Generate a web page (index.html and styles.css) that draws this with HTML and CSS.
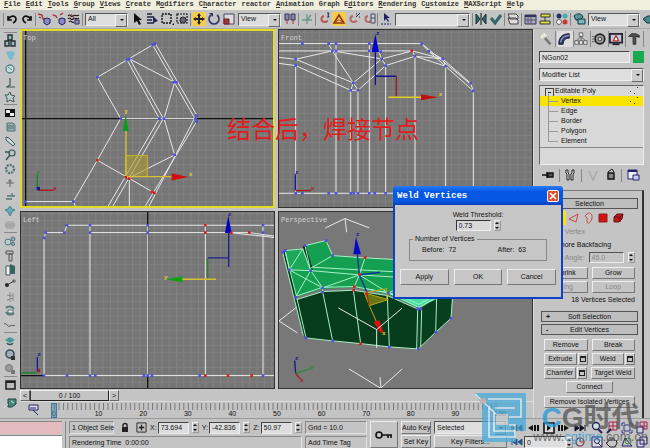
FILE: index.html
```
<!DOCTYPE html>
<html lang="en">
<head>
    <meta charset="UTF-8">
    <meta name="viewport" content="width=device-width, initial-scale=1.0">
    <title>Weld Vertices</title>
    <link rel="stylesheet" href="styles.css">
</head>
<body>
<div class="app">
    <nav class="menubar">
        <button><u>F</u>ile</button>
        <button><u>E</u>dit</button>
        <button><u>T</u>ools</button>
        <button><u>G</u>roup</button>
        <button><u>V</u>iews</button>
        <button><u>C</u>reate</button>
        <button>M<u>o</u>difiers</button>
        <button>C<u>h</u>aracter</button>
        <button>reactor</button>
        <button><u>A</u>nimation</button>
        <button>Graph E<u>d</u>itors</button>
        <button><u>R</u>endering</button>
        <button>C<u>u</u>stomize</button>
        <button><u>M</u>AXScript</button>
        <button><u>H</u>elp</button>
    </nav>

    <div class="toolbar">
        <i class="sep"></i>
        <button class="tool" aria-label="Undo"><svg viewBox="0 0 14 14"><path d="M3 4v4h4M3 8c2-5 8-5 8-1 0 2-1 3-3 4" fill="none" stroke="#111" stroke-width="1.6"/></svg></button>
        <button class="tool" aria-label="Redo"><svg viewBox="0 0 14 14"><path d="M11 4v4H7M11 8C9 3 3 3 3 7c0 2 1 3 3 4" fill="none" stroke="#111" stroke-width="1.6"/></svg></button>
        <i class="sep"></i>
        <button class="tool" aria-label="Link"><svg viewBox="0 0 14 14"><path d="M1 2l4 1 1 4 3 1" fill="none" stroke="#a33" stroke-width="1.5"/><path d="M7 7l3-1 3 1v4l-3 2-3-2z" fill="#88c" stroke="#225"/><path d="M2 5l2 1" stroke="#333"/></svg></button>
        <button class="tool" aria-label="Unlink"><svg viewBox="0 0 14 14"><path d="M1 3l3 1 1 2M8 3l3-2" fill="none" stroke="#a33" stroke-width="1.4"/><path d="M7 7l3-1 3 1v4l-3 2-3-2z" fill="#88c" stroke="#225"/></svg></button>
        <button class="tool" aria-label="Bind"><svg viewBox="0 0 14 14"><path d="M1 4c2-3 3 2 5 0s3 1 6-1M1 7c2-3 3 2 5 0s3 1 6-1M2 10c2-3 3 2 5 0" fill="none" stroke="#222" stroke-width="1.2"/><path d="M4 2l7 9" stroke="#a33"/><path d="M8 8h4v4H8z" fill="#99c" stroke="#225"/></svg></button>
        <i class="sep"></i>
        <label class="combo combo-all"><select aria-label="Selection filter"><option>All</option></select></label>
        <button class="tool" aria-label="Select"><svg viewBox="0 0 14 14"><path d="M4 1v10l3-2 2 4 2-1-2-4h3z" fill="#111"/></svg></button>
        <button class="tool" aria-label="Select by name"><svg viewBox="0 0 14 14"><path d="M2 2h5M2 5h7M2 8h5M2 11h7" stroke="#224" stroke-width="1.6"/><path d="M8 4v7l5-2z" fill="#225"/></svg></button>
        <button class="tool" aria-label="Rectangular region"><svg viewBox="0 0 14 14"><path d="M2 2h9v9H2z" fill="none" stroke="#111" stroke-width="1.4" stroke-dasharray="2 1"/><path d="M12 13h2v-2z"/></svg></button>
        <button class="tool" aria-label="Window crossing"><svg viewBox="0 0 14 14"><path d="M2 2h10v9H2z" fill="none" stroke="#111" stroke-width="1.2" stroke-dasharray="2 1"/><circle cx="8" cy="8" r="3" fill="#667" stroke="#222"/></svg></button>
        <i class="sep"></i>
        <button class="tool on" aria-label="Move"><svg viewBox="0 0 14 14"><path d="M7 1l2 3H8v2h2V5l3 2-3 2V8H8v2h1l-2 3-2-3h1V8H4v1L1 7l3-2v1h2V4H5z" fill="#222"/></svg></button>
        <button class="tool" aria-label="Rotate"><svg viewBox="0 0 14 14"><path d="M4 3a5 5 0 1 0 6 0" fill="none" stroke="#336" stroke-width="1.6"/><path d="M2 1h4v4z" fill="#336"/></svg></button>
        <button class="tool" aria-label="Scale"><svg viewBox="0 0 14 14"><path d="M2 2h10v10H2z" fill="#ddd" stroke="#446"/><path d="M2 7h5v5H2z" fill="#a33" stroke="#622"/></svg></button>
        <label class="combo combo-view"><select aria-label="Reference coordinates"><option>View</option></select></label>
        <button class="tool" aria-label="Pivot"><svg viewBox="0 0 14 14"><path d="M2 2h4v6H2zM8 2h4v6H8z" fill="#88a" stroke="#335"/><path d="M4 8v4M10 8v4" stroke="#a33"/></svg></button>
        <i class="sep"></i>
        <button class="tool" aria-label="Manipulate"><svg viewBox="0 0 14 14"><path d="M7 2v10M2 8h10M7 8l4-5" stroke="#698" stroke-width="1.3" fill="none"/></svg></button>
        <i class="sep"></i>
        <button class="tool" aria-label="Snap"><svg viewBox="0 0 14 14"><path d="M7 4a3 3 0 1 0 1 6l3-1" fill="none" stroke="#b55" stroke-width="2"/><path d="M10 1h2l-1 2 1 2h-2" fill="none" stroke="#224"/></svg></button>
        <button class="tool on" aria-label="Angle snap"><svg viewBox="0 0 14 14"><path d="M2 11l5-8 5 8z" fill="none" stroke="#831" stroke-width="1.5"/><path d="M4 11a3 3 0 0 1 6 0" fill="none" stroke="#b44"/></svg></button>
        <button class="tool" aria-label="Percent snap"><svg viewBox="0 0 14 14"><path d="M6 4a3 3 0 1 0 1 6l3-1" fill="none" stroke="#b66" stroke-width="2"/><path d="M9 5l4-4M9 2h1M12 5h1" stroke="#224"/></svg></button>
        <button class="tool" aria-label="Spinner snap"><svg viewBox="0 0 14 14"><path d="M6 4a3 3 0 1 0 1 6l3-1" fill="none" stroke="#b66" stroke-width="2"/><path d="M9 2h4v9H9zM9 6h4" fill="#ccc" stroke="#446"/></svg></button>
        <i class="sep"></i>
        <button class="tool" aria-label="Named selections"><svg viewBox="0 0 14 14"><path d="M5 1v8l2-2 2 3 1-1-2-3h3z" fill="#226"/><path d="M2 12h10" stroke="#226" stroke-dasharray="2 1"/></svg></button>
        <label class="combo combo-sets"><select aria-label="Named selection sets"><option></option></select></label>
        <i class="sep"></i>
        <button class="tool" aria-label="Mirror"><svg viewBox="0 0 14 14"><path d="M2 2v10l4-5zM12 2v10L8 7z" fill="#366" stroke="#133"/><path d="M7 1v12" stroke="#111"/></svg></button>
        <button class="tool" aria-label="Align"><svg viewBox="0 0 14 14"><path d="M2 6l4 5 6-8" fill="none" stroke="#366" stroke-width="3"/></svg></button>
        <i class="sep"></i>
        <button class="tool" aria-label="Layers"><svg viewBox="0 0 14 14"><path d="M2 2h8l2 2v3H4zM2 6h8l2 2v4H4z" fill="#ddd" stroke="#444"/></svg></button>
        <i class="sep"></i>
        <button class="tool" aria-label="Curve editor"><svg viewBox="0 0 14 14"><path d="M2 3h11v9H2z" fill="#aab" stroke="#335"/><path d="M2 4h11" stroke="#335" stroke-width="2"/><path d="M5 5v7M8 5v7M2 8h11" stroke="#557"/></svg></button>
        <button class="tool" aria-label="Schematic view"><svg viewBox="0 0 14 14"><path d="M3 2h9v3H3zM2 9h10v3H2z" fill="#dd4" stroke="#333"/><path d="M7 5v4" stroke="#333"/></svg></button>
        <i class="sep"></i>
        <button class="tool" aria-label="Material editor"><svg viewBox="0 0 14 14"><circle cx="4" cy="4" r="2.5" fill="#236"/><circle cx="10" cy="4" r="2.5" fill="#4aa"/><circle cx="4" cy="10" r="2.5" fill="#eee" stroke="#666"/><circle cx="10" cy="10" r="2.5" fill="#c33"/></svg></button>
        <i class="sep"></i>
        <button class="tool" aria-label="Render scene"><svg viewBox="0 0 14 14"><path d="M2 4c3-3 8-3 9 1l-3 3H4z" fill="#599" stroke="#134"/><path d="M6 7h7v5H6z" fill="#7bb" stroke="#134"/></svg></button>
        <label class="combo combo-render"><select aria-label="Render type"><option>View</option></select></label>
        <button class="tool tool-cut" aria-label="Quick render"><svg viewBox="0 0 14 14"><path d="M1 7l3-2c3-2 6-1 8 1l-2 5H5z" fill="#488" stroke="#134"/></svg></button>
    </div>

    <div class="workspace">
        <aside class="sidebar">
            <i class="rule"></i>
            <button class="tool" aria-label="Rigid body"><svg viewBox="0 0 14 14"><path d="M5 1h4v5H5zM2 7h4v5H2zM8 7h4v5H8z" fill="#9bb" stroke="#233" stroke-width="1.4"/></svg></button>
            <button class="tool" aria-label="Cloth"><svg viewBox="0 0 14 14"><path d="M3 4l4-1 5 1-3 8-3-1z" fill="#7bc"/></svg></button>
            <button class="tool" aria-label="Soft body"><svg viewBox="0 0 14 14"><circle cx="7" cy="7" r="4" fill="#cdd" stroke="#588" stroke-width="1.4"/><path d="M5 5l4 3" stroke="#588"/></svg></button>
            <button class="tool" aria-label="Rope"><svg viewBox="0 0 14 14"><path d="M7 2v8M3 11h9M7 9l-3 2" stroke="#455" stroke-width="1.2" fill="none"/></svg></button>
            <button class="tool" aria-label="Deforming mesh"><svg viewBox="0 0 14 14"><path d="M7 2l1 3 4 1-2 2 1 4-4-2-3 2V8L2 5h3z" fill="#bcc" stroke="#455"/></svg></button>
            <i class="rule"></i>
            <button class="tool" aria-label="Plane"><svg viewBox="0 0 14 14"><path d="M2 3h10v8H2z" fill="#111"/><path d="M3 4h4v3H3zM7 7h4v3H7z" fill="#eee"/></svg></button>
            <button class="tool" aria-label="Spring"><svg viewBox="0 0 14 14"><path d="M4 3h6l2 2v6H4z" fill="#9aa" stroke="#577"/><path d="M4 6h7M4 8h7" stroke="#577"/></svg></button>
            <button class="tool" aria-label="Linear dashpot"><svg viewBox="0 0 14 14"><path d="M3 3l3 1 6 6-2 2-7-6z" fill="#cdd" stroke="#355"/></svg></button>
            <button class="tool" aria-label="Angular dashpot"><svg viewBox="0 0 14 14"><circle cx="9" cy="5" r="3" fill="none" stroke="#355" stroke-width="1.2"/><path d="M2 4h5M7 7l-4 5" stroke="#355" stroke-width="1.4"/></svg></button>
            <button class="tool" aria-label="Motor"><svg viewBox="0 0 14 14"><circle cx="7" cy="7" r="4" fill="none" stroke="#577" stroke-width="2.4" stroke-dasharray="2 1"/></svg></button>
            <button class="tool" aria-label="Wind"><svg viewBox="0 0 14 14"><path d="M7 3v8M3 7h8M5 5h4" stroke="#666"/></svg></button>
            <button class="tool" aria-label="Toy car"><svg viewBox="0 0 14 14"><path d="M4 6h8M3 9h6M9 3v3" stroke="#577" stroke-width="1.3"/></svg></button>
            <button class="tool" aria-label="Fracture"><svg viewBox="0 0 14 14"><path d="M7 2l2 3 3 1-3 2-2 4-2-4-3-2 3-1z" fill="#6ab" stroke="#488"/></svg></button>
            <button class="tool" aria-label="Water"><svg viewBox="0 0 14 14"><path d="M3 4h8M3 10h8" stroke="#999"/><path d="M3 5v4M5 5v4M7 5v4M9 5v4M11 5v4" stroke="#888"/></svg></button>
            <i class="rule"></i>
            <button class="tool" aria-label="Constraint solver"><svg viewBox="0 0 14 14"><circle cx="5" cy="8" r="3" fill="#bcc" stroke="#577"/><circle cx="10" cy="5" r="2" fill="#8ab" stroke="#577"/><circle cx="10" cy="10" r="1.6" fill="#8ab" stroke="#577"/></svg></button>
            <button class="tool" aria-label="Rag doll"><svg viewBox="0 0 14 14"><path d="M3 3h7v3H3zM6 6h3v7H6z" fill="#bbb" stroke="#555"/></svg></button>
            <button class="tool" aria-label="Hinge"><svg viewBox="0 0 14 14"><path d="M3 4h4v9H3z" fill="#eee" stroke="#455"/><path d="M7 2l5 2v8H7z" fill="#366"/></svg></button>
            <button class="tool" aria-label="Point to point"><svg viewBox="0 0 14 14"><circle cx="4" cy="9" r="2" fill="#222"/><circle cx="11" cy="5" r="1.8" fill="#777"/><path d="M4 9l7-4" stroke="#444"/></svg></button>
            <button class="tool" aria-label="Prismatic"><svg viewBox="0 0 14 14"><path d="M7 2v10M4 5l5 1M4 10l6-2M10 3v8" stroke="#888" fill="none"/></svg></button>
            <button class="tool" aria-label="Car wheel"><svg viewBox="0 0 14 14"><path d="M3 4a5 5 0 0 1 8 1M11 9a5 5 0 0 1-8-1" fill="none" stroke="#577" stroke-width="2"/><path d="M5 6h5v3H5z" fill="#eee" stroke="#577"/></svg></button>
            <button class="tool" aria-label="Carpet"><svg viewBox="0 0 14 14"><path d="M1 6c3-2 3 4 6 2s3 1 5-1" fill="none" stroke="#555"/></svg></button>
            <i class="rule"></i>
            <button class="tool" aria-label="Property editor"><svg viewBox="0 0 14 14"><path d="M2 6l5-3 5 3-5 3z" fill="#499"/><path d="M4 9c1 2 5 2 6 0" fill="none" stroke="#355" stroke-width="1.6"/></svg></button>
            <button class="tool" aria-label="Analyze world"><svg viewBox="0 0 14 14"><circle cx="7" cy="6" r="4" fill="#aab" stroke="#355" stroke-width="1.6"/><path d="M8 8h4v4H8z" fill="#333"/></svg></button>
            <button class="tool" aria-label="Preview"><svg viewBox="0 0 14 14"><circle cx="6" cy="6" r="3.5" fill="#999" stroke="#777"/><path d="M8 8h4v4H8z" fill="#777"/></svg></button>
            <i class="rule"></i>
            <button class="tool" aria-label="Open script"><svg viewBox="0 0 14 14"><path d="M3 3h9v8H3z" fill="#bbb" stroke="#222" stroke-width="1.6"/><path d="M3 4h9" stroke="#222" stroke-width="2"/></svg></button>
            <button class="tool tool-last" aria-label="Script listener"><svg viewBox="0 0 14 14"><path d="M5 3h8v5l-4 3H5z" fill="#487" stroke="#244"/><path d="M1 12l4-4M8 5l3 2" stroke="#dde"/></svg></button>
        </aside>

        <main class="stage">
            <div class="viewports">
                <section class="viewport active">
                    <svg viewBox="60 12 765 536" preserveAspectRatio="xMidYMid slice">
                        <defs>
                            <pattern id="grid" width="22" height="22" patternUnits="userSpaceOnUse">
                                <rect width="22" height="22" fill="#767676"/>
                                <path d="M0 1.5h22M1.5 0v22" stroke="#828282" stroke-width="3"/>
                            </pattern>
                        </defs>
                        <rect x="60" y="12" width="765" height="536" fill="url(#grid)"/>
                        <path d="M60 281H825M77 12V548" stroke="#111" stroke-width="4"/>
                        <g class="wire">
                            <path d="M381 105L292 157L362 281L292 406L220 530H75M381 105L458 60L590 290L433 548M466 56L590 270M381 105L478 281L322 548M390 103L490 281L336 548M390 103L524 172L492 281L524 390L385 460M583 281L445 548M362 281H590M292 406L460 502M388 460V548M220 530L228 548"/>
                        </g>
                        <path d="M378 392h64v63h-64z" fill="#a89a30" fill-opacity=".6" stroke="#c8b428" stroke-width="3"/>
                        <path d="M378 318V455H515" fill="none" stroke="#d8c030" stroke-width="4"/>
                        <path d="M377 270l9 48h-18z" fill="#0a9a20"/>
                        <path d="M565 456l-50-11v22z" fill="#d01010"/>
                        <g class="verts">
                            <path d="M292 157h0M381 105h0M388 102h0M458 60h0M464 56h0M521 172h0M529 172h0M362 281h0M478 281h0M492 281h0M590 272h0M586 282h0M590 290h0M524 390h0M220 530h0M76 530h0"/>
                            <path class="red" d="M292 406h0M377 457h0M387 461h0M456 501h0M463 504h0"/>
                        </g>
                        <path d="M112 490V448" stroke="#0a8a20" stroke-width="4"/>
                        <path d="M115 496h46" stroke="#b01818" stroke-width="4"/>
                        <path d="M110 486h10v10h-10z" fill="#1818a0"/>
                        <text x="373" y="264" class="axis yellow">y</text>
                        <text x="566" y="452" class="axis yellow">x</text>
                        <text x="108" y="446" class="axis green">y</text>
                        <text x="160" y="496" class="axis redtext">x</text>
                    </svg>
                    <span class="view-name">Top</span>
                </section>

                <section class="viewport">
                    <svg viewBox="9 12 765 536" preserveAspectRatio="xMidYMid slice">
                        <rect x="9" y="12" width="765" height="536" fill="url(#grid)"/>
                        <g class="wire">
                            <path d="M9 56H440L461 79L503 102L587 175L595 198V505M440 56L587 178M9 78H412L503 102M9 97L62 103L172 78L320 102L412 78L420 94L512 124V505M9 115L62 122V505M62 103L235 174L320 102M62 122L227 196L235 174L249 196L332 122L420 94V505M172 78L235 174M161 56L172 78M183 56V505M227 196V505M249 196V505M283 56V505M320 102L310 78M320 102L332 122V505M227 196H249M461 79L595 198M420 94L503 102L512 124M9 505H595"/>
                        </g>
                        <path d="M301 82V180M301 154H364" fill="none" stroke="#141490" stroke-width="4"/>
                        <path d="M301 28l11 53h-22z" fill="#0000c8"/>
                        <path d="M364 154V215" stroke="#a01818" stroke-width="4"/>
                        <path d="M340 217H438" stroke="#e0d020" stroke-width="4"/>
                        <path d="M490 217l-52-9v18z" fill="#c01010"/>
                        <g class="verts">
                            <path d="M82 56h0M161 56h0M183 56h0M283 56h0M440 56h0M172 78h0M183 78h0M283 78h0M317 80h0M461 79h0M62 103h0M62 122h0M320 102h0M332 122h0M420 94h0M503 102h0M512 124h0M235 174h0M227 196h0M249 196h0M587 175h0M595 198h0M62 505h0M82 505h0M161 505h0M183 505h0M227 505h0M236 505h0M249 505h0M283 505h0M299 505h0M332 505h0"/>
                            <path class="red" d="M410 78h0"/>
                        </g>
                        <path d="M61 496V448" stroke="#1818a8" stroke-width="4"/>
                        <path d="M62 497h46" stroke="#a01818" stroke-width="4"/>
                        <text x="303" y="30" class="axis blue">z</text>
                        <text x="491" y="214" class="axis yellow">x</text>
                        <text x="60" y="446" class="axis blue">z</text>
                        <text x="107" y="496" class="axis redtext">x</text>
                    </svg>
                    <span class="view-name">Front</span>
                </section>

                <section class="viewport">
                    <svg viewBox="60 16 765 536" preserveAspectRatio="xMidYMid slice">
                        <rect x="60" y="16" width="765" height="536" fill="url(#grid)"/>
                        <path d="M443 16V552M60 510H132" stroke="#111" stroke-width="4"/>
                        <g class="wire">
                            <path d="M132 510V97L137 81H193L201 59H825M270 59V510M443 59V510M616 59V510M789 59V510M270 81H748L825 92M690 81L825 96M132 510H825"/>
                        </g>
                        <path d="M686 82V184M686 157H623" fill="none" stroke="#1c1c90" stroke-width="4"/>
                        <path d="M685 30l10 52h-20z" fill="#0000c0"/>
                        <path d="M623 157V220" stroke="#308030" stroke-width="4"/>
                        <path d="M648 221H545" stroke="#d8c030" stroke-width="4"/>
                        <path d="M497 221l50-9v18z" fill="#10a010"/>
                        <g class="verts">
                            <path d="M137 81h0M132 97h0M193 81h0M201 59h0M270 59h0M270 81h0M443 59h0M443 81h0M789 59h0M789 81h0M132 510h0M201 510h0M270 510h0M286 510h0M432 510h0M443 510h0M456 510h0M599 510h0M789 510h0"/>
                            <path class="red" d="M616 59h0M616 81h0M694 82h0M748 81h0M616 510h0M684 510h0M755 510h0"/>
                        </g>
                        <path d="M112 498V454" stroke="#1818a8" stroke-width="4"/>
                        <path d="M64 502h46" stroke="#0a8a20" stroke-width="4"/>
                        <path d="M112 490h8v10h-8z" fill="#a02020"/>
                        <text x="683" y="30" class="axis blue">z</text>
                        <text x="492" y="220" class="axis yellow">y</text>
                        <text x="112" y="451" class="axis blue">z</text>
                    </svg>
                    <span class="view-name">Left</span>
                </section>

                <section class="viewport">
                    <svg viewBox="24 16 765 536" preserveAspectRatio="xMidYMid slice">
                        <rect x="24" y="16" width="765" height="536" fill="#787878"/>
                        <path class="lights" d="M166 67L225 39L298 67M225 39L230 80M82 303L27 346L82 382M237 490L332 548L397 490M330 515L333 548"/>
                        <path d="M45 135L98 130L122 195L105 120L168 105L188 150L285 157L400 163L500 270L447 308L352 266L253 246L158 250L78 275z" fill="#14a050"/>
                        <path d="M45 135L98 130L122 195L58 193z" fill="#1ca858"/>
                        <path d="M38 140L45 135L80 275L108 397L100 390z" fill="#063818"/>
                        <path d="M98 122L106 118L128 190L122 198z" fill="#052c14"/>
                        <path d="M80 282L158 258L250 254L352 270L447 312L445 430L358 424L272 414L188 406L108 397z" fill="#073d1c"/>
                        <path d="M447 312L500 275L548 265L543 338L497 380L445 430z" fill="#06401e"/>
                        <path d="M352 262L447 306L505 278L400 270z" fill="#48e0a0"/>
                        <g class="mesh">
                            <path d="M45 135L98 130L122 195L58 193zM45 135L80 275L108 397L188 406L272 414L358 424L445 430L497 380L543 338L548 270M105 120L168 105L188 150L285 157L400 163M105 120L122 195M188 150L122 188M98 130L58 193M58 193L158 247M122 195L78 272L158 245L253 243L355 262L447 306L500 275M80 282L158 258L250 254L352 270L447 312M122 195L158 247L268 208L400 216M122 195L268 208L285 157M128 185L400 200M268 208L253 243M268 208L355 262L370 255M158 247V258L188 406M250 254L272 414M352 270L358 424M443 312L440 430M455 312L452 424M500 275L497 380M38 140L100 390M370 262L447 296L480 278M290 250L400 270"/>
                        </g>
                        <path d="M283 262l72 20-57 18z" fill="#968a10" fill-opacity=".7" stroke="#b8a818" stroke-width="3"/>
                        <path d="M285 262L350 249V280M298 300L320 350" fill="none" stroke="#c8a018" stroke-width="3"/>
                        <path d="M268 208L262 145M268 208L330 200M268 208L290 258" fill="none" stroke="#10309a" stroke-width="4"/>
                        <path d="M290 258L297 300" stroke="#b02020" stroke-width="3"/>
                        <path d="M258 94l15 52h-23z" fill="#0808c8"/>
                        <path d="M311 350l17-7 12 36-8 4z" fill="#e01010"/>
                        <path class="lights" d="M205 307L320 372L396 308M320 372V427"/>
                        <g class="verts">
                            <path d="M38 140h0M46 135h0M105 120h0M168 105h0M188 150h0M58 193h0M122 195h0M78 275h0M158 247h0M158 260h0M355 262h0M443 310h0M452 310h0M108 397h0M188 405h0M358 424h0M445 430h0M497 380h0M543 338h0"/>
                            <path class="red" d="M285 156h0M268 206h0M253 243h0M251 254h0M272 414h0M290 265h0"/>
                        </g>
                        <path d="M77 503L74 465" stroke="#181890" stroke-width="4"/>
                        <path d="M77 503L120 490" stroke="#2a8a3a" stroke-width="4"/>
                        <path d="M77 503L92 522" stroke="#b02020" stroke-width="4"/>
                        <text x="257" y="90" class="axis blue">z</text>
                        <text x="336" y="388" class="axis yellow">x</text>
                        <text x="74" y="463" class="axis blue">z</text>
                        <text x="119" y="491" class="axis green">y</text>
                        <text x="90" y="529" class="axis redtext">x</text>
                    </svg>
                    <span class="view-name">Perspective</span>
                </section>
                <p class="caption" lang="zh-CN">结合后，焊接节点</p>
            </div>

            <div class="time-slider">
                <button class="step">&lt;</button>
                <button class="thumb">0 / 100</button>
                <button class="step">&gt;</button>
            </div>
            <div class="track">
                <button class="tool" aria-label="Mini curve editor"><svg viewBox="0 0 14 14"><path d="M3 2h9v5H3z" fill="#dde" stroke="#226"/><path d="M7 7l5 5M4 5h6" stroke="#226" fill="none"/></svg></button>
                <div class="ruler">
                    <svg class="ticks" viewBox="0 0 446 7" preserveAspectRatio="none">
                        <defs><pattern id="tick" width="4.46" height="7" patternUnits="userSpaceOnUse"><path d="M.5 0v7" stroke="#777"/></pattern></defs>
                        <rect width="446" height="7" fill="url(#tick)"/>
                    </svg>
                    <div class="frames">
                        <span>0</span><span>10</span><span>20</span><span>30</span><span>40</span><span>50</span><span>60</span><span>70</span><span>80</span><span>90</span><span>100</span>
                    </div>
                    <i class="playhead"></i>
                </div>
            </div>
        </main>

        <aside class="command">
            <div class="tabs">
                <button aria-label="Create"><svg viewBox="0 0 16 16"><path d="M7 7l6 7" stroke="#777" stroke-width="3"/><path d="M6 1v4M2 6h3M3 3l2 2M9 3L7 5" stroke="#f8f8e0" stroke-width="1.6"/></svg></button>
                <button class="selected" aria-label="Modify"><svg viewBox="0 0 16 16"><path d="M2 14C2 6 6 2 14 2v5c-5 0-7 3-7 7z" fill="#336" stroke="#112"/><path d="M4 12C5 7 8 4 14 4" fill="none" stroke="#89c" stroke-width="1.5"/></svg></button>
                <button aria-label="Hierarchy"><svg viewBox="0 0 16 16"><path d="M6 1h4v4H6zM1 10h4v4H1zM6 10h4v4H6zM11 10h4v4h-4z" fill="#eee" stroke="#555"/><path d="M8 5v5M3 10l5-5 5 5" fill="none" stroke="#555"/></svg></button>
                <button aria-label="Motion"><svg viewBox="0 0 16 16"><circle cx="9" cy="8" r="5.5" fill="#999" stroke="#222" stroke-width="2"/><circle cx="9" cy="8" r="2" fill="#ddd" stroke="#333"/><path d="M0 5h3M0 8h3M0 11h3" stroke="#555"/></svg></button>
                <button aria-label="Display"><svg viewBox="0 0 16 16"><path d="M1 2h14v10H1z" fill="#bcd" stroke="#223" stroke-width="2"/><path d="M5 10l3-6 3 6z" fill="#fff" stroke="#c22" stroke-width="1.4"/><path d="M4 14h8" stroke="#222" stroke-width="2"/></svg></button>
                <button aria-label="Utilities"><svg viewBox="0 0 16 16"><path d="M2 5l3-3h5l4 2v2l-4-1v9H7V5z" fill="#555" stroke="#222"/></svg></button>
            </div>
            <div class="name-row">
                <input type="text" value="NGon02" aria-label="Object name">
                <button class="swatch" aria-label="Object color"></button>
            </div>
            <label class="combo combo-mod"><select aria-label="Modifier list"><option>Modifier List</option></select></label>
            <div class="stack">
                <ul>
                    <li class="root">Editable Poly</li>
                    <li class="current">Vertex</li>
                    <li>Edge</li>
                    <li>Border</li>
                    <li>Polygon</li>
                    <li>Element</li>
                </ul>
            </div>
            <div class="stack-tools">
                <button class="tool" aria-label="Pin stack"><svg viewBox="0 0 14 14"><path d="M1 7h5M6 4v6M7 5h5v4H7z" fill="#555" stroke="#111" stroke-width="1.4"/></svg></button>
                <i class="sep"></i>
                <button class="tool" aria-label="Show end result"><svg viewBox="0 0 14 14"><path d="M3 2h2v3l1 1v6H4V6L3 5zM11 2H9v3L8 6v6h2V6l1-1z" fill="#eee" stroke="#222"/></svg></button>
                <i class="sep"></i>
                <button class="tool" aria-label="Make unique"><svg viewBox="0 0 14 14"><path d="M3 3l3 7 1 2 1-2 3-7" fill="none" stroke="#aaa" stroke-width="1.5"/></svg></button>
                <button class="tool" aria-label="Remove modifier"><svg viewBox="0 0 14 14"><path d="M4 5h6v6H4z" fill="#888" stroke="#111" stroke-width="1.4"/><path d="M4 4l4-3 2 3" fill="none" stroke="#111"/></svg></button>
                <i class="sep"></i>
                <button class="tool" aria-label="Configure sets"><svg viewBox="0 0 14 14"><path d="M2 2h9v9H2z" fill="#eef" stroke="#226"/><path d="M2 3h9" stroke="#226" stroke-width="2"/><path d="M7 7h6v5H7z" fill="#cce" stroke="#226"/></svg></button>
            </div>

            <div class="rollouts">
                <button class="rollout-head"><b>-</b>Selection</button>
                <div class="rollout">
                    <div class="levels">
                        <button aria-label="Vertex" class="lit"><svg viewBox="0 0 14 14"><path d="M5 4h2v2H5zM9 8h2v2H9z" fill="#c22"/></svg></button>
                        <button aria-label="Edge"><svg viewBox="0 0 14 14"><path d="M2 8l9-5-2 8z" fill="none" stroke="#c44"/></svg></button>
                        <button aria-label="Border"><svg viewBox="0 0 14 14"><path d="M4 4c3-4 7-1 6 3s-4 7-5 4 2-3 0-4-2-2-1-3z" fill="none" stroke="#c44"/></svg></button>
                        <button aria-label="Polygon"><svg viewBox="0 0 14 14"><path d="M3 3h8v8H3z" fill="#d81010" stroke="#822"/></svg></button>
                        <button aria-label="Element"><svg viewBox="0 0 14 14"><path d="M3 6l3-3h6l-1 5-3 3H3z" fill="#c01818" stroke="#611"/><path d="M3 6h6l3-3M9 6v5" fill="none" stroke="#611"/></svg></button>
                    </div>
                    <label class="check dim"><input type="checkbox" disabled>By Vertex</label>
                    <label class="check"><input type="checkbox">Ignore Backfacing</label>
                    <label class="check dim"><input type="checkbox" disabled>By Angle:<input class="num" type="text" value="45.0" aria-label="Angle" disabled><i class="spin"></i></label>
                    <div class="pair pair-first"><button>Shrink</button><button>Grow</button></div>
                    <div class="pair"><button disabled>Ring</button><button disabled>Loop</button></div>
                    <p class="count">18 Vertices Selected</p>
                </div>
                <button class="rollout-head"><b>+</b>Soft Selection</button>
                <button class="rollout-head"><b>-</b>Edit Vertices</button>
                <div class="rollout edit">
                    <div class="pair"><button>Remove</button><button>Break</button></div>
                    <div class="pair"><span class="split"><button>Extrude</button><button class="opt" aria-label="Extrude settings"></button></span><span class="split"><button>Weld</button><button class="opt" aria-label="Weld settings"></button></span></div>
                    <div class="pair"><span class="split"><button>Chamfer</button><button class="opt" aria-label="Chamfer settings"></button></span><button>Target Weld</button></div>
                    <div class="single"><button>Connect</button></div>
                    <div class="single wide"><button>Remove Isolated Vertices</button></div>
                </div>
            </div>
        </aside>
    </div>

    <footer class="status">
        <div class="listener"><i class="pink"></i><i class="white"></i></div>
        <div class="info">
            <div class="coords">
                <span class="field sel">1 Object Sele</span>
                <svg class="lock" viewBox="0 0 10 12"><path d="M3 5V3c0-2 4-2 4 0v2" fill="none" stroke="#222" stroke-width="1.4"/><path d="M2 5h6v5H2z" fill="#222"/></svg>
                <svg class="abs" viewBox="0 0 12 12"><path d="M1 1h10v10H1z" fill="none" stroke="#222"/><path d="M6 3v6M3 6h6" stroke="#222" stroke-width="1.6"/></svg>
                <label>X:<input type="text" value="73.694"></label><i class="spin"></i>
                <label>Y:<input type="text" value="-42.836"></label><i class="spin"></i>
                <label>Z:<input type="text" value="50.97"></label><i class="spin"></i>
            </div>
            <span class="field">Rendering Time&nbsp; 0:00:00</span>
        </div>
        <div class="tags"><span class="field">Grid = 10.0</span><span class="field">Add Time Tag</span></div>
        <button class="key" aria-label="Set keys"><svg viewBox="0 0 18 10"><circle cx="4" cy="5" r="3" fill="none" stroke="#111" stroke-width="1.6"/><path d="M7 5h10M13 5v3M16 5v3" stroke="#111" stroke-width="1.6"/></svg></button>
        <div class="autokey"><button>Auto Key</button><button>Set Key</button></div>
        <div class="filters">
            <label class="combo"><select aria-label="Key set"><option>Selected</option></select></label>
            <button>Key Filters...</button>
        </div>
        <div class="playback">
            <div>
                <button class="tool" aria-label="Go to start"><svg viewBox="0 0 14 14"><path d="M2 4v6M7 4v6L3 7zM12 4v6L8 7z" fill="#112" stroke="#112"/></svg></button>
                <button class="tool" aria-label="Previous frame"><svg viewBox="0 0 14 14"><path d="M7 4v6L2 7z" fill="#111"/><path d="M9 4v6M12 4v6" stroke="#111" stroke-width="2"/></svg></button>
                <button class="tool" aria-label="Play"><svg viewBox="0 0 14 14"><path d="M2 2h10v10H2z" fill="#ddd" stroke="#111" stroke-width="1.6"/><path d="M5 4v6l4-3z" fill="#111"/></svg></button>
                <button class="tool" aria-label="Next frame"><svg viewBox="0 0 14 14"><path d="M7 4v6l5-3z" fill="#111"/><path d="M2 4v6M5 4v6" stroke="#111" stroke-width="2"/></svg></button>
                <button class="tool" aria-label="Go to end"><svg viewBox="0 0 14 14"><path d="M12 4v6M2 4v6l4-3zM7 4v6l4-3z" fill="#112" stroke="#112"/></svg></button>
            </div>
            <div>
                <button class="tool" aria-label="Key mode"><svg viewBox="0 0 14 14"><path d="M2 4v6M7 4v6L3 7zM12 4v6L8 7z" fill="#258" stroke="#258"/></svg></button>
                <input type="text" value="0" aria-label="Current frame"><i class="spin"></i>
                <button class="tool" aria-label="Time configuration"><svg viewBox="0 0 14 14"><circle cx="7" cy="7" r="4" fill="#ccc" stroke="#634" stroke-width="1.2"/><path d="M7 4v3h3" fill="none" stroke="#a33"/></svg></button>
            </div>
        </div>
        <div class="nav">
            <button class="tool" aria-label="Zoom"><svg viewBox="0 0 14 14"><circle cx="6" cy="5" r="3.5" fill="#cdd" stroke="#225" stroke-width="1.3"/><path d="M8 8l4 4" stroke="#225" stroke-width="2"/></svg></button>
            <button class="tool" aria-label="Zoom all"><svg viewBox="0 0 14 14"><path d="M4 1h8v8H4zM8 1v8M4 5h8" fill="none" stroke="#a24"/><path d="M2 12l4-4" stroke="#225" stroke-width="2"/></svg></button>
            <button class="tool" aria-label="Zoom extents"><svg viewBox="0 0 14 14"><path d="M2 5V2h3M9 2h3v3M2 9v3h3M9 12h3V9M4 4h6v6H4z" fill="none" stroke="#338"/></svg></button>
            <button class="tool" aria-label="Zoom extents all"><svg viewBox="0 0 14 14"><path d="M5 1h7v7H5zM9 1v7M5 5h7" fill="none" stroke="#a24"/><path d="M2 6h6v6H2z" fill="#ccd" stroke="#226"/></svg></button>
            <button class="tool" aria-label="Region zoom"><svg viewBox="0 0 14 14"><path d="M2 2h10v10H2z" fill="#ddd" stroke="#226"/><circle cx="7" cy="6" r="2.5" fill="none" stroke="#226"/><path d="M8 8l4 4" stroke="#226"/></svg></button>
            <button class="tool" aria-label="Pan"><svg viewBox="0 0 14 14"><path d="M3 7V4M5 6V2M7 6V2M9 6V3M3 7l-2 1 4 4h5l2-4-1-3" fill="none" stroke="#222"/></svg></button>
            <button class="tool" aria-label="Arc rotate"><svg viewBox="0 0 14 14"><path d="M2 11L5 3l7 8z" fill="none" stroke="#226"/><circle cx="8" cy="6" r="3" fill="none" stroke="#383"/></svg></button>
            <button class="tool" aria-label="Maximize viewport"><svg viewBox="0 0 14 14"><path d="M2 5h7v7H2zM5 2h7v7H5z" fill="#ccd" stroke="#226"/></svg></button>
        </div>
    </footer>

    <form class="dialog">
        <header><h1>Weld Vertices</h1><button type="button" class="close" aria-label="Close"><svg viewBox="0 0 10 10"><path d="M2 2l6 6M8 2l-6 6" stroke="#fff" stroke-width="1.6"/></svg></button></header>
        <div class="dialog-body">
            <label for="threshold">Weld Threshold:</label>
            <div class="threshold"><input id="threshold" type="text" value="0.73"><i class="spin"></i></div>
            <fieldset>
                <legend>Number of Vertices</legend>
                <span>Before:&nbsp; 72</span><span>After:&nbsp; 63</span>
            </fieldset>
            <div class="dialog-buttons"><button type="button">Apply</button><button type="button">OK</button><button type="button">Cancel</button></div>
        </div>
    </form>

    <div class="watermark">
        <svg class="mark" viewBox="0 0 52 50">
            <path d="M0 0h52v38H42v11H8V11z" fill="#48a8d8"/>
            <path d="M22 21h12v11H22z" fill="#c8ccd0"/>
            <path d="M1 1l21 20M14 6h33v18H35M15 13v31h26V32H35M21 15h20M20 20v18h21" fill="none" stroke="#e4eef4" stroke-width="1.6"/>
            <circle cx="9" cy="8" r="3" fill="#c4a8a8"/>
        </svg>
        <div class="words">
            <strong><em>C</em>G<span lang="zh-CN">时代</span></strong>
            <small>www.<em>cgtime</em>.com.cn</small>
        </div>
    </div>
</div>
</body>
</html>
```

FILE: styles.css
```
* {
    box-sizing: border-box;
}

body {
    margin: 0;
    background: #c4c4c4;
    color: #111;
    font: 7px/10px "Liberation Sans", Arial, sans-serif;
}

button,
input,
select {
    margin: 0;
    padding: 0;
    border: 0;
    border-radius: 0;
    font: inherit;
    color: inherit;
    background: none;
}

button {
    white-space: nowrap;
}

svg {
    display: block;
}

.app {
    position: relative;
    display: flex;
    flex-direction: column;
    min-height: 100vh;
    overflow: hidden;
}

/* Menu bar */
.menubar {
    display: flex;
    gap: 5px;
    height: 10px;
    padding-left: 4px;
    background: #f0eedc;
    color: #333;
    font: bold 7px/10px "Liberation Mono", monospace;
}

.menubar button {
    height: 9px;
    line-height: 9px;
}

/* Toolbars */
.toolbar {
    display: flex;
    align-items: center;
    gap: 1px;
    height: 19px;
    padding-left: 3px;
    border-bottom: 1px solid #aaa;
    overflow: hidden;
}

.tool {
    flex: none;
    width: 14px;
    height: 14px;
}

.tool svg {
    width: 14px;
    height: 14px;
}

.tool.on {
    background: #f4cc50;
}

/* runs off the window edge */
.tool-cut {
    width: 8px;
    overflow: hidden;
}

.sep {
    flex: none;
    width: 1px;
    height: 13px;
    background: #888;
}

.combo {
    position: relative;
    display: block;
    height: 13px;
    border: 1px solid;
    border-color: #555 #eee #eee #555;
    background: #dedede;
}

.toolbar .combo {
    margin: 0 1px;
}

.combo select {
    display: block;
    width: 100%;
    height: 11px;
    padding-left: 2px;
    appearance: none;
    outline: none;
}

.combo::before {
    content: "";
    position: absolute;
    top: 0;
    right: 0;
    width: 10px;
    height: 11px;
    border: 1px solid;
    border-color: #f4f4f4 #666 #666 #f4f4f4;
    background: #ccc;
    pointer-events: none;
}

.combo::after {
    content: "";
    position: absolute;
    top: 5px;
    right: 3px;
    border: 2px solid transparent;
    border-top-color: #111;
    border-bottom: 0;
    pointer-events: none;
}

.combo-all,
.combo-view {
    flex: 0 0 43px;
}

.combo-sets {
    flex: 0 0 75px;
}

.combo-render {
    flex: 1 1 49px;
}

.workspace {
    display: flex;
    flex: 1;
}

.sidebar {
    display: flex;
    flex-direction: column;
    align-items: center;
    width: 20px;
    padding-top: 3px;
}

.rule {
    width: 13px;
    height: 1px;
    margin: 0 0 1px;
    background: #888;
}

.sidebar .tool-last {
    margin-top: 4px;
}

/* Viewports */
.stage {
    display: flex;
    flex: 1;
    flex-direction: column;
    min-width: 0;
}

.viewports {
    position: relative;
    display: grid;
    flex: 1;
    grid-template-columns: 1fr 1fr;
    grid-template-rows: 1fr 1fr;
    gap: 3px;
    min-height: 320px;
}

.viewport {
    position: relative;
    overflow: hidden;
}

.viewport svg {
    position: absolute;
    width: 100%;
    height: 100%;
}

.viewport::after {
    content: "";
    position: absolute;
    inset: 0;
    border: 1px solid #333;
}

.viewport.active::after {
    border: 2px solid #e2dc28;
}

.view-name {
    position: absolute;
    top: 4px;
    left: 3px;
    color: #d4d4d4;
    font: 7px/10px "Liberation Mono", monospace;
}

.wire,
.mesh,
.lights {
    fill: none;
    stroke: #e8e8e8;
    stroke-width: 3;
}

.mesh {
    stroke: #a8f0c8;
}

.verts {
    fill: none;
    stroke: #5050e0;
    stroke-width: 8;
    stroke-linecap: square;
}

.verts .red {
    stroke: #d02020;
}

.axis {
    font: bold 18px "Liberation Mono", monospace;
}

.yellow {
    fill: #e0d030;
}

.green {
    fill: #188a28;
}

.blue {
    fill: #1414a8;
}

.redtext {
    fill: #b01818;
}

.caption {
    position: absolute;
    top: 85px;
    left: 207px;
    margin: 0;
    color: #e01c1c;
    font: 24px/32px "Liberation Sans", "Noto Sans CJK SC", sans-serif;
    white-space: nowrap;
}

/* Time slider and track bar */
.time-slider {
    display: flex;
    height: 12px;
    padding-top: 1px;
}

.step,
.thumb {
    height: 11px;
    border: 1px solid;
    border-color: #eee #666 #666 #eee;
    line-height: 9px;
}

.step {
    width: 10px;
}

.thumb {
    width: 79px;
    border-color: #eee #222 #222 #333;
}

.track {
    display: flex;
    height: 17px;
    padding: 1px 26px 0 6px;
    border-top: 1px solid #ddd;
}

.ruler {
    position: relative;
    flex: 1;
    margin-left: 7px;
}

.ticks {
    width: calc(100% - 14px);
    height: 7px;
    margin-left: 7px;
}

.frames {
    display: flex;
    justify-content: space-between;
    line-height: 8px;
}

.frames span {
    width: 14px;
    text-align: center;
}

.playhead {
    position: absolute;
    top: 0;
    left: 4px;
    width: 6px;
    height: 15px;
    border: 1px solid #46789a;
    background: rgba(80, 140, 180, 0.6);
}

/* Command panel */
.command {
    display: flex;
    flex-direction: column;
    width: 117px;
    padding: 2px 6px 0 5px;
    border-left: 1px solid #ddd;
}

.tabs {
    display: flex;
    justify-content: space-between;
}

.tabs button {
    width: 17px;
    height: 16px;
    border-right: 1px solid #888;
}

.tabs .selected {
    background: #ddd;
}

.tabs svg {
    width: 14px;
    height: 14px;
}

.name-row {
    display: flex;
    gap: 3px;
    margin: 4px 0 5px;
}

.name-row input {
    flex: 1;
    min-width: 0;
    height: 12px;
    padding-left: 2px;
    border: 1px solid;
    border-color: #444 #eee #eee #444;
    background: #dcdcdc;
}

.swatch {
    width: 11px;
    height: 12px;
    background: #18a850;
}

.stack {
    height: 80px;
    margin: 4px 0 3px;
    border: 1px solid;
    border-color: #666 #eee #eee #666;
    background: #d8d8d8;
}

.stack ul {
    position: relative;
    margin: 0;
    padding: 0 0 1px;
    border-bottom: 1px solid #888;
    list-style: none;
}

/* tree trunk */
.stack ul::before {
    content: "";
    position: absolute;
    z-index: 1;
    top: 8px;
    bottom: 5px;
    left: 8px;
    border-left: 1px solid #999;
}

.stack li {
    position: relative;
    padding-left: 21px;
}

.stack li::before {
    content: "";
    position: absolute;
    top: 5px;
    left: 8px;
    width: 10px;
    border-top: 1px solid #999;
}

.stack .current {
    background: #f8e400;
}

.stack .root {
    padding-left: 15px;
}

.stack .root::before {
    top: 2px;
    left: 5px;
    width: 7px;
    height: 7px;
    border: 1px solid #444;
    background: linear-gradient(#222, #222) center / 3px 1px no-repeat #d8d8d8;
}

.stack .root::after,
.stack .current::after {
    content: "";
    position: absolute;
    top: 5px;
    right: 12px;
    width: 1px;
    height: 1px;
    background: #222;
    box-shadow: 4px 2px #222, 7px -4px #222;
}

.stack-tools {
    display: flex;
    align-items: center;
    justify-content: space-between;
    height: 14px;
    padding: 0 4px 0 2px;
}

.rollouts {
    flex: 1;
    margin-top: 8px;
    padding: 7px 4px 0 2px;
    border-top: 1px solid #777;
    border-right: 2px solid #333;
}

.rollout-head {
    position: relative;
    display: block;
    width: 100%;
    height: 11px;
    margin-bottom: 2px;
    border: 1px solid #555;
    background: #bdbdbd;
    line-height: 9px;
}

.rollout-head b {
    position: absolute;
    left: 4px;
}

.rollout {
    padding: 0 3px 6px;
}

.levels {
    display: flex;
    justify-content: space-between;
    padding: 0 10px 0 8px;
}

.levels button,
.levels svg {
    width: 14px;
    height: 14px;
}

.levels .lit {
    background: #f8e400;
}

.check {
    display: flex;
    align-items: center;
    gap: 4px;
    height: 13px;
    white-space: nowrap;
}

.check input[type="checkbox"] {
    width: 7px;
    height: 7px;
    appearance: none;
    border: 1px solid #666;
    background: #ddd;
}

.dim,
.pair button:disabled {
    color: #888;
}

.num {
    flex: 1;
    min-width: 0;
    height: 11px;
    padding-left: 2px;
    border: 1px solid;
    border-color: #555 #eee #eee #555;
}

.spin {
    position: relative;
    flex: none;
    width: 7px;
    height: 11px;
    border: 1px solid;
    border-color: #eee #999 #999 #eee;
}

.spin::before,
.spin::after {
    content: "";
    position: absolute;
    left: 0;
    border: 2px solid transparent;
}

.spin::before {
    top: 1px;
    border-top: 0;
    border-bottom-color: #111;
}

.spin::after {
    bottom: 1px;
    border-bottom: 0;
    border-top-color: #111;
}

.pair {
    display: flex;
    gap: 4px;
    margin-bottom: 2px;
}

.pair-first {
    margin-top: 3px;
}

.pair > * {
    flex: 1 1 0;
    min-width: 0;
}

.pair button,
.single button,
.dialog-buttons button {
    height: 12px;
    border: 1px solid;
    border-color: #eee #777 #777 #eee;
    line-height: 10px;
}

.split {
    display: flex;
    gap: 1px;
}

.split button {
    flex: 1;
}

.split .opt {
    position: relative;
    flex: 0 0 10px;
}

.opt::before {
    content: "";
    position: absolute;
    inset: 2px 1px;
    border: 1px solid #222;
    border-top-width: 2px;
}

.count {
    margin: 0;
    text-align: right;
}

.edit {
    padding-top: 2px;
}

.single {
    margin: 0 22px 3px;
}

.single button {
    width: 100%;
}

.single.wide {
    margin: 0;
}

/* Status bar */
.status {
    display: flex;
    gap: 3px;
    height: 30px;
    padding: 2px 1px 0 0;
    border-top: 1px solid #999;
}

.listener {
    display: flex;
    flex-direction: column;
    width: 62px;
    gap: 1px;
}

.pink,
.white {
    flex: 1;
    background: #e4bcc0;
    border-top: 1px solid #888;
}

.white {
    background: #fff;
}

.info {
    display: flex;
    flex: 1;
    flex-direction: column;
    gap: 2px;
    padding-left: 3px;
    border-left: 1px solid #888;
}

.coords {
    display: flex;
    align-items: center;
    gap: 3px;
    height: 13px;
}

.coords label {
    display: flex;
    flex: 1;
    align-items: center;
    gap: 1px;
}

.coords input,
.playback input {
    flex: 1;
    width: 0;
    min-width: 0;
    height: 12px;
    padding-left: 2px;
    border: 1px solid;
    border-color: #444 #eee #eee #444;
    background: #ddd;
}

.lock {
    width: 10px;
    height: 12px;
    margin: 0 3px;
}

.abs {
    width: 11px;
    height: 11px;
}

.field {
    height: 13px;
    padding: 1px 2px 0;
    border: 1px solid;
    border-color: #888 #e4e4e4 #e4e4e4 #888;
    white-space: nowrap;
}

.field.sel {
    width: 45px;
}

.tags {
    display: flex;
    flex-direction: column;
    gap: 2px;
    width: 62px;
}

.key {
    width: 28px;
    border: 1px solid;
    border-color: #eee #777 #777 #eee;
}

.key svg {
    width: 18px;
    height: 10px;
    margin: 0 auto;
}

.autokey,
.filters {
    display: flex;
    flex-direction: column;
    gap: 1px;
    width: 30px;
}

.autokey button,
.filters button {
    height: 13px;
    border: 1px solid;
    border-color: #eee #777 #777 #eee;
    line-height: 11px;
}

.filters {
    width: 73px;
}

.playback {
    width: 77px;
}

.playback div {
    display: flex;
    align-items: center;
    justify-content: space-between;
    height: 14px;
}

.nav {
    display: grid;
    grid-template-columns: repeat(4, 14px);
    column-gap: 1px;
    align-content: start;
}

/* Weld dialog */
.dialog {
    position: absolute;
    top: 186px;
    left: 393px;
    width: 170px;
    border: 2px solid #1040c8;
    border-top: 0;
    border-radius: 4px 4px 0 0;
    background: #c6c6c6;
}

.dialog header {
    display: flex;
    align-items: center;
    justify-content: space-between;
    height: 19px;
    margin: 0 -2px;
    padding: 0 4px;
    border-radius: 4px 4px 0 0;
    background: linear-gradient(#2a7cf4, #0458e4 30%, #0458e4 80%, #0840b8);
}

.dialog h1 {
    margin: 0;
    color: #fff;
    font: bold 9px/12px "Liberation Mono", monospace;
}

.close {
    width: 12px;
    height: 12px;
    border: 1px solid #fff;
    border-radius: 2px;
    background: #e05030;
}

.close svg {
    width: 10px;
    height: 10px;
}

.dialog-body {
    display: flex;
    flex-direction: column;
    align-items: center;
    padding: 5px 5px 12px;
}

.threshold {
    display: flex;
    gap: 3px;
}

.threshold input {
    width: 35px;
    height: 11px;
    padding-left: 2px;
    border: 1px solid;
    border-color: #333 #eee #eee #333;
    background: #d8d8d8;
}

.dialog fieldset {
    display: flex;
    align-self: stretch;
    justify-content: space-between;
    height: 27px;
    margin: 3px 9px 8px;
    padding: 1px 20px 0 12px;
    border: 1px solid #888;
}

.dialog legend {
    margin-left: -9px;
    padding: 0 2px;
}

.dialog-buttons {
    display: flex;
    align-self: stretch;
    gap: 5px;
}

.dialog-buttons button {
    flex: 1;
    height: 16px;
    line-height: 14px;
}

/* Watermark */
.watermark {
    position: absolute;
    right: 2px;
    bottom: 5px;
    display: flex;
    align-items: flex-end;
    gap: 7px;
    opacity: 0.75;
    pointer-events: none;
}

.mark {
    width: 52px;
    height: 50px;
}

.words {
    display: flex;
    flex-direction: column;
    align-items: center;
}

.words strong {
    color: #555;
    font: bold 28px/27px "Liberation Sans", "Noto Sans CJK SC", sans-serif;
}

.words em {
    color: #2098d8;
    font-style: normal;
}

.words small {
    color: #555;
    font: 13px/12px "Liberation Sans", Arial, sans-serif;
}

.words small em {
    color: #3098d0;
}
```
